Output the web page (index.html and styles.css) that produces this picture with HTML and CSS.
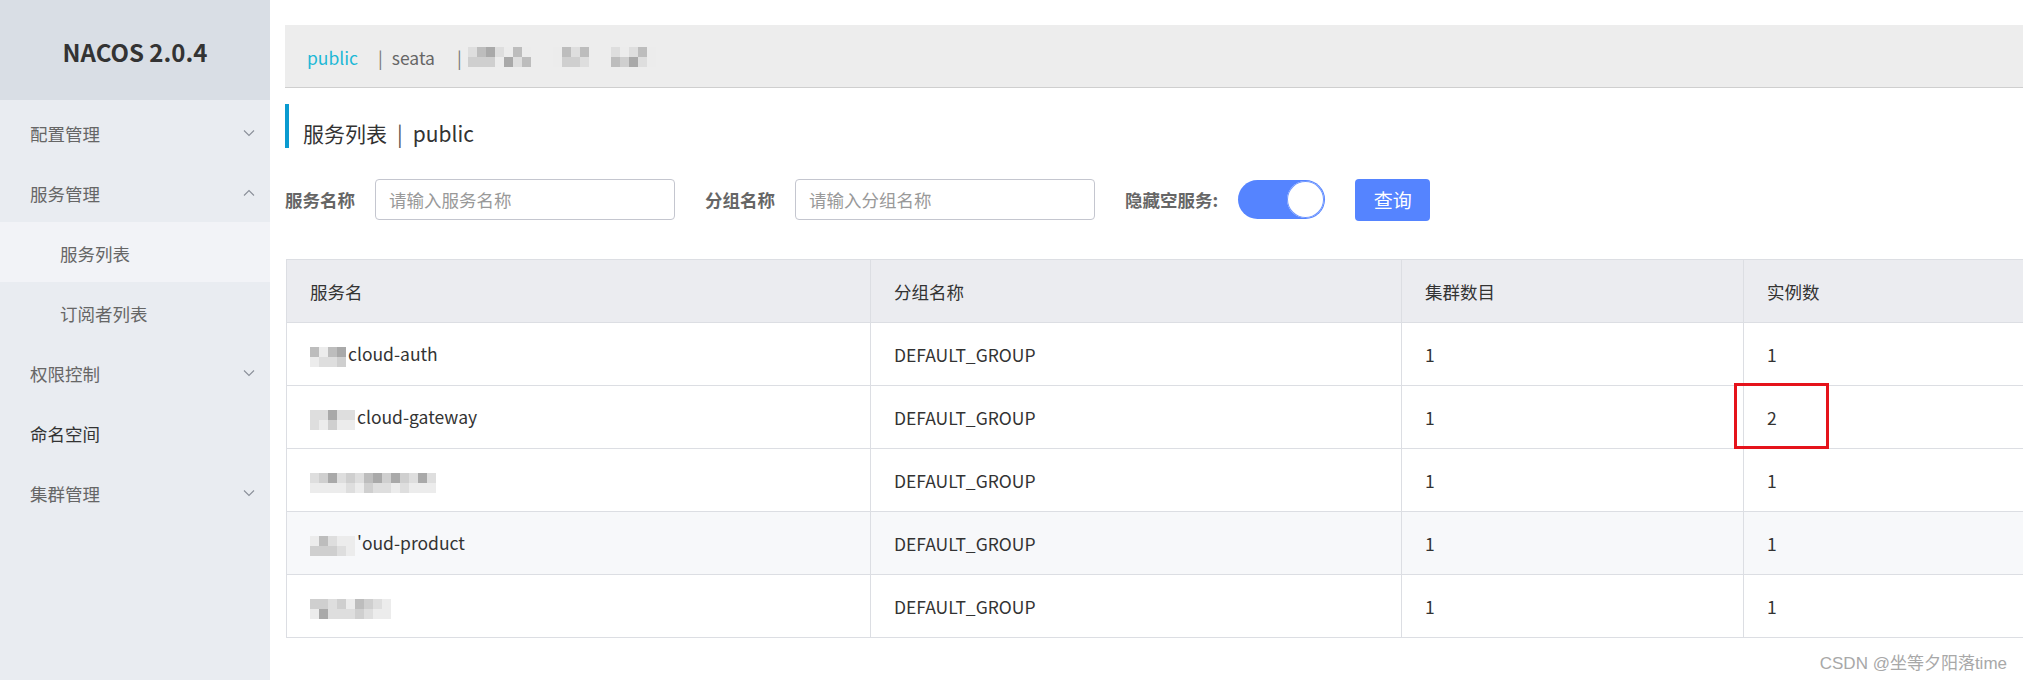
FILE: index.html
```html
<!DOCTYPE html>
<html lang="zh-CN">
<head>
<meta charset="utf-8">
<title>Nacos</title>
<link rel="stylesheet" href="styles.css">
</head>
<body>
<div class="app">
  <aside class="sidebar">
    <div class="brand">NACOS 2.0.4</div>
    <ul class="menu">
      <li class="item"><span>配置管理</span><svg class="chev" viewBox="0 0 12 8"><polyline points="1,1.5 6,6.5 11,1.5"/></svg></li>
      <li class="item"><span>服务管理</span><svg class="chev" viewBox="0 0 12 8"><polyline points="1,6.5 6,1.5 11,6.5"/></svg></li>
      <li class="item sub active"><span>服务列表</span></li>
      <li class="item sub"><span>订阅者列表</span></li>
      <li class="item"><span>权限控制</span><svg class="chev" viewBox="0 0 12 8"><polyline points="1,1.5 6,6.5 11,1.5"/></svg></li>
      <li class="item dark"><span>命名空间</span></li>
      <li class="item"><span>集群管理</span><svg class="chev" viewBox="0 0 12 8"><polyline points="1,1.5 6,6.5 11,1.5"/></svg></li>
    </ul>
  </aside>
  <main class="main">
    <div class="nsbar">
      <span class="ns current">public</span>
      <span class="ns"><span class="pipe">|</span>seata</span>
      <span class="ns last"><span class="pipe">|</span></span>
      <span class="mz w7">
        <i class="d"></i><i class="c"></i><i class="b"></i><i class="c"></i><i class="a"></i><i class="c"></i><i class="d"></i><i class="e"></i><i class="e"></i><i class="a"></i><i class="b"></i><i class="d"></i><i class="e"></i><i class="b"></i>
      </span>
      <span class="mz gap1">
        <i class="e"></i><i class="e"></i><i class="b"></i><i class="c"></i><i class="d"></i><i class="c"></i><i class="b"></i><i class="d"></i>
      </span>
      <span class="mz gap1">
        <i class="d"></i><i class="b"></i><i class="e"></i><i class="c"></i><i class="d"></i><i class="a"></i><i class="b"></i><i class="d"></i><i class="e"></i><i class="e"></i>
      </span>
    </div>

    <h2 class="title">服务列表 <span class="sep">|</span> public</h2>

    <form class="search">
      <label class="lbl">服务名称</label>
      <input class="inp" type="text" placeholder="请输入服务名称">
      <label class="lbl">分组名称</label>
      <input class="inp" type="text" placeholder="请输入分组名称">
      <label class="lbl">隐藏空服务:</label>
      <span class="switch"><span class="knob"></span></span>
      <button class="btn" type="button">查询</button>
    </form>

    <table class="grid">
      <colgroup>
        <col class="c1"><col class="c2"><col class="c3"><col class="c4">
      </colgroup>
      <thead>
        <tr><th>服务名</th><th>分组名称</th><th>集群数目</th><th>实例数</th></tr>
      </thead>
      <tbody>
        <tr>
          <td><span class="mz"><i class="b"></i><i class="e"></i><i class="e"></i><i class="d"></i><i class="b"></i><i class="d"></i><i class="a"></i><i class="c"></i></span>cloud-auth</td>
          <td>DEFAULT_GROUP</td><td>1</td><td>1</td>
        </tr>
        <tr>
          <td><span class="mz"><i class="d"></i><i class="d"></i><i class="d"></i><i class="e"></i><i class="a"></i><i class="c"></i><i class="d"></i><i class="e"></i><i class="d"></i><i class="e"></i></span>cloud-gateway</td>
          <td>DEFAULT_GROUP</td><td>1</td><td class="mark">2<span class="redbox"></span></td>
        </tr>
        <tr>
          <td><span class="mz"><i class="d"></i><i class="e"></i><i class="c"></i><i class="e"></i><i class="a"></i><i class="e"></i><i class="d"></i><i class="e"></i><i class="c"></i><i class="d"></i><i class="d"></i><i class="e"></i><i class="b"></i><i class="c"></i><i class="a"></i><i class="d"></i><i class="c"></i><i class="d"></i><i class="a"></i><i class="e"></i><i class="c"></i><i class="d"></i><i class="d"></i><i class="e"></i><i class="a"></i><i class="e"></i><i class="d"></i><i class="e"></i></span></td>
          <td>DEFAULT_GROUP</td><td>1</td><td>1</td>
        </tr>
        <tr class="hover">
          <td><span class="mz"><i class="e"></i><i class="c"></i><i class="b"></i><i class="c"></i><i class="d"></i><i class="c"></i><i class="e"></i><i class="d"></i><i class="e"></i><i class="e"></i></span>'oud-product</td>
          <td>DEFAULT_GROUP</td><td>1</td><td>1</td>
        </tr>
        <tr>
          <td><span class="mz"><i class="c"></i><i class="e"></i><i class="c"></i><i class="a"></i><i class="d"></i><i class="d"></i><i class="c"></i><i class="d"></i><i class="e"></i><i class="d"></i><i class="b"></i><i class="c"></i><i class="c"></i><i class="d"></i><i class="d"></i><i class="e"></i><i class="e"></i><i class="e"></i></span></td>
          <td>DEFAULT_GROUP</td><td>1</td><td>1</td>
        </tr>
      </tbody>
    </table>
  </main>
  <div class="watermark">CSDN @坐等夕阳落time</div>
</div>
</body>
</html>
```

FILE: styles.css
```css
* { box-sizing: border-box; }
html, body {
  margin: 0;
  padding: 0;
  background: #ffffff;
  height: 680px;
  overflow: hidden;
}
body {
  font-family: "Noto Sans CJK SC", "Noto Sans", sans-serif;
  font-size: 17.5px;
  color: #333;
}
.app {
  display: flex;
  height: 680px;
  position: relative;
}

/* sidebar */
.sidebar {
  width: 270px;
  flex: 0 0 270px;
  background: #e9ecf1;
  height: 100%;
}
.brand {
  height: 100px;
  background: #d9dee5;
  display: flex;
  align-items: center;
  justify-content: center;
  font-weight: 700;
  font-size: 24px;
  color: #333;
  padding-top: 2px;
}
.menu {
  list-style: none;
  margin: 0;
  padding: 2px 0 0 0;
}
.item {
  height: 60px;
  display: flex;
  align-items: center;
  justify-content: space-between;
  padding: 2px 15px 0 30px;
  color: #666;
  font-size: 17.5px;
}
.item.sub { padding-left: 60px; }
.item.active { background: #f2f3f7; }
.item.dark { color: #333; }
.chev {
  width: 12px;
  height: 8px;
  fill: none;
  stroke: #8a8f99;
  stroke-width: 1.1;
}

/* main */
.main {
  flex: 1;
  min-width: 0;
  padding: 25px 0 0 15px;
  overflow: hidden;
}
.nsbar {
  height: 63px;
  background: #ededed;
  border-bottom: 1px solid #cfcfcf;
  display: flex;
  align-items: center;
  padding: 2px 0 0 22px;
  font-size: 17.5px;
  color: #666;
}
.ns { margin-right: 20px; white-space: nowrap; }
.ns.current { color: #1cb8d6; }
.ns:nth-child(2) { margin-right: 22px; }
.pipe { color: #777; margin-right: 9px; }
.ns.last { margin-right: 0; }
.ns.last .pipe { margin-right: 6px; }

.mz {
  display: inline-grid;
  grid-auto-flow: column;
  grid-template-rows: 10px 10px;
  grid-auto-columns: 9px;
  vertical-align: middle;
  margin-right: 2px;
}
.mz.gap1 { margin-left: 20px; }
.mz i { display: block; }
.mz .a { background: #a9a9a9; }
.mz .b { background: #bdbdbd; }
.mz .c { background: #cfcfcf; }
.mz .d { background: #dedede; }
.mz .e { background: #ececec; }

.title {
  margin: 16px 0 0 0;
  height: 44px;
  border-left: 4px solid #0a9bd0;
  padding: 14px 0 0 14px;
  display: flex;
  align-items: center;
  font-size: 21px;
  font-weight: 400;
  color: #333;
}
.sep { margin: 0 10px; color: #555; }

.search {
  margin-top: 31px;
  height: 41px;
  display: flex;
  align-items: center;
}
.lbl {
  font-weight: 700;
  color: #666;
  font-size: 17.5px;
  margin-right: 20px;
  white-space: nowrap;
}
.lbl:first-child { margin-right: 20px; }
.inp {
  width: 300px;
  height: 41px;
  border: 1px solid #c4c6cf;
  border-radius: 4px;
  padding: 0 13px;
  font-family: inherit;
  font-size: 17.5px;
  color: #333;
  margin-right: 30px;
  outline: none;
}
.inp::placeholder { color: #999; }
.switch {
  width: 87px;
  height: 39px;
  border-radius: 20px;
  background: #5584ff;
  display: flex;
  align-items: center;
  justify-content: flex-end;
  padding-right: 1px;
  margin-left: 0;
}
.knob {
  width: 37px;
  height: 37px;
  border-radius: 50%;
  background: #fff;
  box-shadow: inset 0 0 0 1px #6b94ff;
}
.btn {
  margin-left: 30px;
  width: 75px;
  height: 42px;
  background: #5584ff;
  border: none;
  border-radius: 4px;
  color: #fff;
  font-family: inherit;
  font-size: 19px;
  padding: 0;
}

.grid {
  margin-top: 39px;
  margin-left: 1px;
  border-collapse: collapse;
  table-layout: fixed;
  width: 1760px;
  border: 1px solid #dcdee3;
}
.c1 { width: 584px; }
.c2 { width: 531px; }
.c3 { width: 342px; }
.c4 { width: 303px; }
.grid th, .grid td {
  border: 1px solid #dcdee3;
  text-align: left;
  padding: 0 0 0 23px;
  font-weight: 400;
  color: #333;
  font-size: 17.5px;
  white-space: nowrap;
}
.grid th {
  height: 63px;
  background: #ebecf0;
}
.grid td { height: 63px; }
.grid tr.hover td { background: #f7f8fa; }
.grid td.mark { position: relative; }
.redbox {
  position: absolute;
  left: -10px;
  top: -3px;
  width: 95px;
  height: 66px;
  border: 3px solid #e5131b;
}

.watermark {
  position: absolute;
  right: 16px;
  top: 649px;
  font-family: "Liberation Sans", "Noto Sans CJK SC", sans-serif;
  font-size: 17px;
  color: #a8a8a8;
  white-space: nowrap;
}
```
